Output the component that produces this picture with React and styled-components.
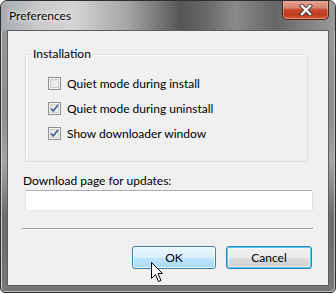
import React from "react";
import styled, { createGlobalStyle } from "styled-components";

const Global = createGlobalStyle`
  html, body { margin: 0; padding: 0; background: #ffffff; }
  body { font-family: "Segoe UI", "Lato", "Noto Sans", sans-serif; }
`;

const Frame = styled.div`
  position: relative;
  box-sizing: border-box;
  width: 336px;
  height: 293px;
  border: 1px solid #2e2e2e;
  border-radius: 7px 7px 5px 5px;
  background: linear-gradient(180deg, #9a9a9a 0%, #8e8e8e 40%, #a4a4a4 55%, #6a6a6a 75%, #777 100%);
  box-shadow: inset 1px 1px 0 #d0d0d0, inset -1px -1px 0 #bdbdbd;
  display: flex;
  flex-direction: column;
  padding: 0 6px 6px 6px;
  overflow: hidden;
`;

const TitleGlass = styled.div`
  position: absolute;
  left: 0;
  right: 0;
  top: 0;
  height: 30px;
  background: linear-gradient(90deg, #a8abae 0%, #c9cbcd 12%, #d4d4d4 22%, #a4a4a4 38%, #555555 54%, #6a6a6a 62%, #8a8a8a 70%, #666666 82%, #828282 92%, #9a9a9a 100%);
  border-radius: 6px 6px 0 0;
`;

const TitleBar = styled.div`
  position: relative;
  height: 29px;
  display: flex;
  align-items: flex-start;
  justify-content: space-between;
`;

const Title = styled.div`
  margin-top: 7px;
  margin-left: 2px;
  font-size: 12px;
  color: #000;
  text-shadow: 0 0 6px rgba(255,255,255,0.9), 0 0 3px rgba(255,255,255,0.9);
`;

const CloseButton = styled.div`
  margin-top: -1px;
  width: 47px;
  height: 20px;
  box-sizing: border-box;
  border: 1px solid #4a2418;
  border-top: none;
  border-radius: 0 0 5px 5px;
  background: linear-gradient(180deg, #e9aa98 0%, #d88472 40%, #c9482e 52%, #bd3a1e 78%, #d8623e 100%);
  box-shadow: inset 0 0 0 1px rgba(255,200,180,0.45);
  display: flex;
  align-items: center;
  justify-content: center;
`;

const Client = styled.div`
  flex: 1;
  box-sizing: border-box;
  border: 1px solid #5e5e5e;
  background: #f0f0f0;
  display: flex;
  flex-direction: column;
  position: relative;
  font-size: 12px;
  color: #000;
`;

const GroupBox = styled.div`
  position: relative;
  box-sizing: border-box;
  margin: 23px 20px 0 17px;
  height: 108px;
  border: 1px solid #d5dfe5;
  border-radius: 3px;
  box-shadow: inset 1px 1px 0 #ffffff;
  padding: 22px 0 0 22px;
  display: flex;
  flex-direction: column;
  gap: 12px;
`;

const Legend = styled.span`
  position: absolute;
  top: -9px;
  left: 5px;
  padding: 0 2px;
  background: #f0f0f0;
  line-height: 16px;
`;

const CheckRow = styled.label`
  display: flex;
  align-items: center;
  height: 13px;
  gap: 6px;
  line-height: 13px;
`;

const Box = styled.span`
  box-sizing: border-box;
  width: 13px;
  height: 13px;
  border: 1px solid #8e8f8f;
  background: linear-gradient(135deg, #dcdcdc 0%, #f0f0f0 60%, #fafafa 100%);
  box-shadow: inset 0 0 0 1px #f4f4f4, inset 0 0 0 2px #cfcfcf;
  display: flex;
  align-items: center;
  justify-content: center;
  flex: none;
`;

const FieldLabel = styled.div`
  margin: 11px 0 0 15px;
  line-height: 16px;
`;

const TextInput = styled.div`
  box-sizing: border-box;
  margin: 1px 15px 0 17px;
  height: 21px;
  background: #ffffff;
  border: 1px solid #abadb3;
  border-color: #abadb3 #dbdfe6 #e3e9ef #e2e3ea;
  border-radius: 2px;
`;

const Separator = styled.div`
  margin: 17px 15px 0 14px;
  height: 1px;
  background: #a0a0a0;
  box-shadow: 0 1px 0 #ffffff;
`;

const ButtonRow = styled.div`
  display: flex;
  justify-content: flex-end;
  gap: 10px;
  margin: 17px 16px 0 0;
`;

const Button = styled.div`
  box-sizing: border-box;
  width: ${(p) => p.w}px;
  height: 23px;
  border: 1px solid #3c7fb1;
  border-radius: 3px;
  display: flex;
  align-items: center;
  justify-content: center;
  font-size: 12px;
  color: #000;
  background: ${(p) =>
    p.hover
      ? "linear-gradient(180deg, #eaf6fd 0%, #d9f0fc 50%, #bee6fd 51%, #a7d9f5 100%)"
      : "linear-gradient(180deg, #f2f2f2 0%, #ebebeb 50%, #dddddd 51%, #cfcfcf 100%)"};
  box-shadow: ${(p) =>
    p.hover
      ? "inset 0 0 0 1px rgba(255,255,255,0.8)"
      : "inset 0 0 0 1px #48d0f5, inset 0 0 0 2px rgba(255,255,255,0.5)"};
`;

const Cursor = styled.svg`
  position: absolute;
  left: 150px;
  top: 261px;
`;

function Check({ checked }) {
  return (
    <Box>
      {checked && (
        <svg width="9" height="9" viewBox="0 0 9 9">
          <path d="M1 4.5 L3.3 7 L8 1" fill="none" stroke="#4b5f97" strokeWidth="1.7" />
        </svg>
      )}
    </Box>
  );
}

export default function App() {
  return (
    <>
      <Global />
      <Frame>
        <TitleGlass />
        <TitleBar>
          <Title>Preferences</Title>
          <CloseButton>
            <svg width="14" height="12" viewBox="0 0 14 12">
              <path d="M3 2 L11 10 M11 2 L3 10" stroke="#3a3a3a" strokeWidth="4.2" strokeLinecap="square" fill="none" />
              <path d="M3 2 L11 10 M11 2 L3 10" stroke="#ffffff" strokeWidth="2.4" strokeLinecap="square" fill="none" />
            </svg>
          </CloseButton>
        </TitleBar>
        <Client>
          <GroupBox>
            <Legend>Installation</Legend>
            <CheckRow>
              <Check />
              Quiet mode during install
            </CheckRow>
            <CheckRow>
              <Check checked />
              Quiet mode during uninstall
            </CheckRow>
            <CheckRow>
              <Check checked />
              Show downloader window
            </CheckRow>
          </GroupBox>
          <FieldLabel>Download page for updates:</FieldLabel>
          <TextInput />
          <Separator />
          <ButtonRow>
            <Button w={84} hover>OK</Button>
            <Button w={86}>Cancel</Button>
          </ButtonRow>
        </Client>
        <Cursor width="13" height="21" viewBox="0 0 13 21">
          <polygon points="0.5,0.5 0.5,16.5 4.5,12.5 7.5,19.5 10,18.5 7,11.5 11.5,11.5" fill="#ffffff" stroke="#000000" strokeWidth="1" />
        </Cursor>
      </Frame>
    </>
  );
}
